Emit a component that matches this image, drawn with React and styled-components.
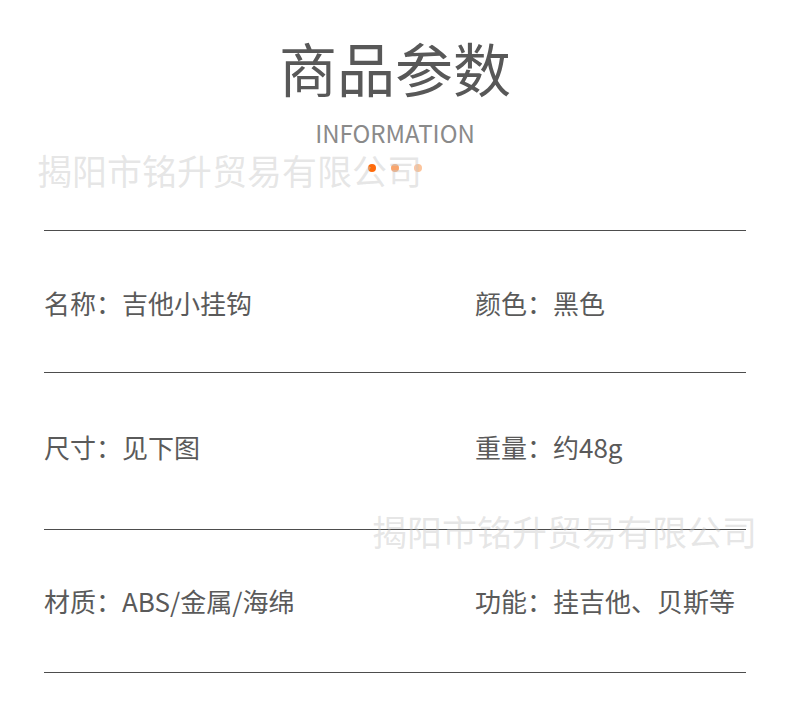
import React from "react";
import styled, { createGlobalStyle } from "styled-components";

const GlobalStyle = createGlobalStyle`
  body {
    margin: 0;
    background: #ffffff;
    font-family: "Noto Sans CJK SC", "Noto Sans", sans-serif;
  }
`;

const Page = styled.div`
  position: relative;
  width: 790px;
  height: 722px;
  overflow: hidden;
  background: #ffffff;
`;

const Header = styled.header`
  display: flex;
  flex-direction: column;
  align-items: center;
  padding-top: 37px;
`;

const Title = styled.h1`
  margin: 0;
  font-size: 58px;
  line-height: 60px;
  font-weight: 400;
  color: #585858;
`;

const SubTitle = styled.div`
  margin-top: 21px;
  font-size: 24px;
  line-height: 30px;
  color: #8a8a8a;
`;

const Dots = styled.div`
  display: flex;
  gap: 15px;
  margin-top: 16px;
`;

const Dot = styled.span`
  width: 8px;
  height: 8px;
  border-radius: 50%;
  background: ${props => props.color};
`;

const Table = styled.section`
  margin: 58px 44px 0 44px;
  border-bottom: 1px solid #4d4d4d;
`;

const Row = styled.div`
  display: grid;
  grid-template-columns: 431px 1fr;
  align-items: center;
  height: ${props => props.h}px;
  border-top: 1px solid #4d4d4d;
  box-sizing: border-box;
  padding-top: ${props => props.up || 0}px;
  padding-bottom: ${props => props.down || 0}px;
`;

const Cell = styled.div`
  font-size: 26px;
  line-height: 30px;
  color: #5a5a5a;
  white-space: nowrap;
`;

const Watermark = styled.div`
  position: absolute;
  left: ${props => props.x}px;
  top: ${props => props.y}px;
  font-size: 35px;
  line-height: 40px;
  color: rgba(200, 200, 200, 0.45);
  white-space: nowrap;
  pointer-events: none;
`;

const rows = [
  { h: 142, up: 2, down: 0, left: "名称：吉他小挂钩", right: "颜色：黑色" },
  { h: 157, up: 0, down: 8, left: "尺寸：见下图", right: "重量：约48g" },
  { h: 143, up: 0, down: 0, left: "材质：ABS/金属/海绵", right: "功能：挂吉他、贝斯等" }
];

export default function App() {
  return (
    <Page>
      <GlobalStyle />
      <Header>
        <Title>商品参数</Title>
        <SubTitle>INFORMATION</SubTitle>
        <Dots>
          <Dot color="#ff6a0a" />
          <Dot color="#f9a56c" />
          <Dot color="#fcc49c" />
        </Dots>
      </Header>
      <Table>
        {rows.map(r => (
          <Row key={r.left} h={r.h} up={r.up} down={r.down}>
            <Cell>{r.left}</Cell>
            <Cell>{r.right}</Cell>
          </Row>
        ))}
      </Table>
      <Watermark x={37} y={150}>揭阳市铭升贸易有限公司</Watermark>
      <Watermark x={372} y={511}>揭阳市铭升贸易有限公司</Watermark>
    </Page>
  );
}
